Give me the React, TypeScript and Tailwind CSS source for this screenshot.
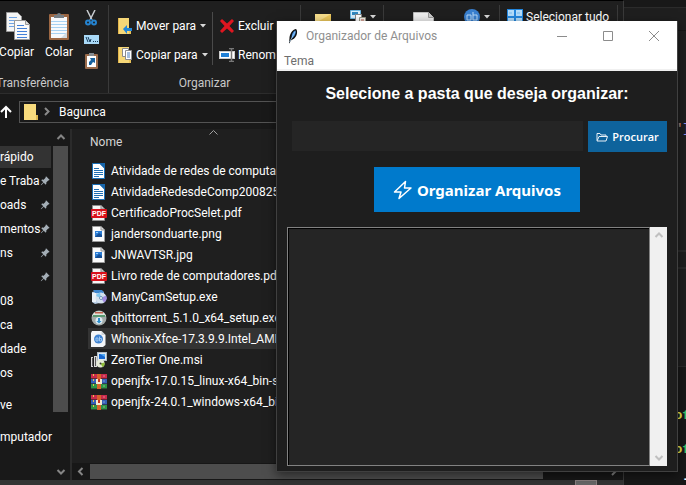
import React from "react";
import { BsPinAngleFill } from "react-icons/bs";

type IconKind = "doc" | "pdf" | "image" | "setup" | "disc" | "box" | "msi" | "rar";

const files: { name: string; icon: IconKind; selected?: boolean }[] = [
  { name: "Atividade de redes de computadores.docx", icon: "doc" },
  { name: "AtividadeRedesdeComp200825.docx", icon: "doc" },
  { name: "CertificadoProcSelet.pdf", icon: "pdf" },
  { name: "jandersonduarte.png", icon: "image" },
  { name: "JNWAVTSR.jpg", icon: "image" },
  { name: "Livro rede de computadores.pdf", icon: "pdf" },
  { name: "ManyCamSetup.exe", icon: "setup" },
  { name: "qbittorrent_5.1.0_x64_setup.exe", icon: "disc" },
  { name: "Whonix-Xfce-17.3.9.9.Intel_AMD64.ova", icon: "box", selected: true },
  { name: "ZeroTier One.msi", icon: "msi" },
  { name: "openjfx-17.0.15_linux-x64_bin-sdk.zip", icon: "rar" },
  { name: "openjfx-24.0.1_windows-x64_bin-sdk.zip", icon: "rar" },
];

const places: { label: string; pinned?: boolean; active?: boolean; spaced?: boolean }[] = [
  { label: "rápido", active: true },
  { label: "e Traba", pinned: true },
  { label: "oads", pinned: true },
  { label: "mentos", pinned: true },
  { label: "ns", pinned: true },
  { label: "", pinned: true },
  { label: "08" },
  { label: "ca" },
  { label: "dade" },
  { label: "os" },
  { label: "ve", spaced: true },
  { label: "mputador", spaced: true },
];

function FileIcon({ kind }: { kind: IconKind }) {
  const svg = "block size-4 shrink-0";
  switch (kind) {
    case "doc":
      return (
        <svg viewBox="0 0 16 16" className={svg}>
          <path d="M1.500.5H9l4.500 4.500v10.500h-12z" fill="#fff" stroke="#1a6fb5" />
          <path d="M8 0h6v6z" fill="#1766ab" />
          <path d="M3 5.500h5M3 7.500h9M3 9.500h9M3 11.500h9M3 13.500h5" stroke="#1f6fb2" />
        </svg>
      );
    case "pdf":
      return (
        <svg viewBox="0 0 16 16" className={svg}>
          <path d="M1.500.5H10l3.500 3.500v11.500h-12z" fill="#f4f4f4" stroke="#8b8b8b" />
          <path d="M10 .5V4h3.500" fill="#ccc" stroke="#8b8b8b" />
          <rect y="4" width="16" height="9" rx="1" fill="#d9101b" />
          <text x="8" y="11" textAnchor="middle" fontFamily="Liberation Sans, sans-serif" fontSize="7" fontWeight="700" fill="#fff">PDF</text>
        </svg>
      );
    case "image":
      return (
        <svg viewBox="0 0 16 16" className={svg}>
          <path d="M1.500.5H10l3.500 3.500v11.500h-12z" fill="#fafafa" stroke="#9a9a9a" />
          <path d="M10 .5V4h3.500" fill="#ddd" stroke="#9a9a9a" />
          <rect x="4" y="5" width="7" height="6" fill="#2b7cd3" />
          <path d="M4 11l4-4 3 2v2z" fill="#174f95" />
          <path d="M5 6h2v1H5z" fill="#9dd0ff" />
        </svg>
      );
    case "setup":
      return (
        <svg viewBox="0 0 16 16" className={svg}>
          <path d="M1 3l9-2 3 2v10l-9 2-3-2z" fill="#b9cfe6" />
          <path d="M2 1h9l2 3H4z" fill="#3d86cf" />
          <path d="M1 4h4v9H1z" fill="#e9f0f7" />
          <circle cx="10" cy="9" r="5.500" fill="#d4e1ee" />
          <path d="M10 9l5-2.500A5.500 5.500 0 0 1 13 13.500z" fill="#a08bdf" />
          <path d="M10 9L5 7a5.500 5.500 0 0 1 4-3.500z" fill="#7fc7ef" />
          <circle cx="10" cy="9" r="1.500" fill="#fff" stroke="#6b93b8" />
        </svg>
      );
    case "disc":
      return (
        <svg viewBox="0 0 16 16" className={svg}>
          <circle cx="8" cy="8" r="7.500" fill="#a3aaa8" />
          <path d="M1 6a7.500 7.500 0 0 1 14 0z" fill="#dfe6df" />
          <path d="M4 2h8v1.500H4z" fill="#c1604f" />
          <path d="M2 5h12v2H2z" fill="#5b9a72" />
          <circle cx="8" cy="10.500" r="3.500" fill="#dcebf3" />
          <path d="M7 8h2v3h1.500L8 13.500 5.500 11H7z" fill="#2d8ecb" />
        </svg>
      );
    case "box":
      return (
        <svg viewBox="0 0 16 16" className={svg}>
          <path d="M1 0h9.500L14.500 4v10L12 16H0V2z" fill="#f4f6f8" />
          <path d="M10.500 0v4h4z" fill="#cfd4d8" />
          <circle cx="7.500" cy="8" r="4.500" fill="#3f83d2" />
          <path d="M5 7h2v3H5zM8.500 5.500V10h2V7.500h-2" fill="none" stroke="#9cc7f2" />
        </svg>
      );
    case "msi":
      return (
        <svg viewBox="0 0 16 16" className={svg}>
          <rect x="6.500" y=".5" width="9" height="8" fill="#dfe8ef" stroke="#aeb9c2" />
          <path d="M8 2h6v5H8z" fill="#1867cf" />
          <path d="M9 2h5v3z" fill="#52a9f3" />
          <path d="M0 5h2v10H0zM3 4h3v11H3z" fill="#d7d7d7" />
          <path d="M4 5h1v9H4zM1 6h1v8H1z" fill="#555" />
          <circle cx="9.500" cy="11.500" r="4" fill="#e6ecd8" />
          <path d="M9.500 11.500l4-1a4 4 0 0 1-2 4.500z" fill="#8ebd3a" />
          <circle cx="9.500" cy="11.500" r="1" fill="#333" />
        </svg>
      );
    default:
      return (
        <svg viewBox="0 0 16 16" className={svg}>
          <rect y="1" width="16" height="5" fill="#c92b4b" />
          <rect y="6" width="16" height="5" fill="#3560b8" />
          <rect y="11" width="16" height="5" fill="#2e9446" />
          <path d="M0 5.500h16M0 10.500h16M0 15.500h16" stroke="#282028" strokeOpacity=".6" />
          <path d="M2.500 1v14" stroke="#e7c34a" strokeDasharray="2 3" />
          <rect x="6" y="1" width="4" height="15" fill="#d8622b" />
          <rect x="5" y="6" width="6" height="5" fill="#f3e9d0" />
          <path d="M7 6h2v3H7z" fill="#c5331f" />
          <path d="M13 2v2M13 7v2M13 12v2" stroke="#fff" strokeOpacity=".4" />
        </svg>
      );
  }
}

function Caret() {
  return (
    <svg viewBox="0 0 6 4" className="h-1 w-1.5 shrink-0">
      <path d="M0 0h6L3 3.500z" fill="#d8d8d8" />
    </svg>
  );
}

function Chevron({ dir, className }: { dir: "up" | "down" | "left" | "right"; className: string }) {
  const d = {
    up: "M1.500 6L5 2.500 8.500 6",
    down: "M1.500 3L5 6.500 8.500 3",
    left: "M6.500 1L3 4.500 6.500 8",
    right: "M3 1l3.500 3.500L3 8",
  }[dir];
  return (
    <svg viewBox="0 0 10 9" className={className}>
      <path d={d} fill="none" stroke="currentColor" strokeWidth="2" />
    </svg>
  );
}

function FolderMove({ copy }: { copy?: boolean }) {
  return (
    <svg viewBox="0 0 14 16" className="h-4 w-3.5 shrink-0">
      <path d="M0 0h11v11h2v5H0z" fill="#f6d777" />
      <path d="M0 0h1v16H0z" fill="#e3b64c" />
      <path d="M11 11h2v5h-2z" fill="#e9c258" />
      {copy ? (
        <>
          <path d="M4.500 1.500h6v8h-6z" fill="#fff" stroke="#8c8c8c" />
          <path d="M7.500 3.500h6v9h-6z" fill="#fff" stroke="#8c8c8c" />
          <path d="M9 6h3M9 8h3M9 10h3" stroke="#4b7fc0" />
        </>
      ) : (
        <path d="M5 11l4-4v3h5v3H9v3z" fill="#2286d8" />
      )}
    </svg>
  );
}

function Ribbon() {
  return (
    <div className="flex h-[93px] shrink-0 border-b border-[#2d2d2d] pt-1">
      <section className="flex w-[109px] shrink-0 flex-col border-r border-[#3a3a3a]">
        <div className="flex h-[70px]">
          <button className="flex w-[34px] flex-col items-end pt-[7px]">
            <svg viewBox="0 0 24 28" className="mr-1 h-7 w-6">
              <path d="M.5.500h11l4 4v15H.5z" fill="#f5f5f5" stroke="#999" />
              <path d="M3 5.500h8M3 8.500h8M3 11.500h8M3 14.500h8" stroke="#70a4e4" />
              <path d="M8.500 8.500h11l4 4v15h-15z" fill="#fafafa" stroke="#999" />
              <path d="M19.500 8.500v4h4" fill="#ddd" stroke="#999" />
              <path d="M11 13.500h7M11 16.500h10M11 19.500h10M11 22.500h10M11 25.500h10" stroke="#4380d8" />
            </svg>
            <span className="mt-1 leading-4">Copiar</span>
          </button>
          <button className="ml-[7px] flex w-[36px] flex-col items-center pt-[7px]">
            <svg viewBox="0 0 20 28" className="h-7 w-5">
              <rect y="2" width="20" height="26" rx="1" fill="#9c6743" />
              <rect x="2" y="5" width="16" height="21" fill="#f8fafc" />
              <path d="M2 9.500h16M2 12.500h16M2 15.500h16M2 18.500h16M2 21.500h16" stroke="#a8d2f2" />
              <path d="M5 3h3a2 2 0 0 1 4 0h3v3H5z" fill="#777f85" />
              <path d="M12 26l6-6v6z" fill="#d4dce2" />
            </svg>
            <span className="mt-1 leading-4">Colar</span>
          </button>
          <div className="ml-1.5 flex w-4 flex-col items-center gap-1.5 pt-[5px]">
            <button aria-label="Recortar">
              <svg viewBox="0 0 12 16" className="block h-4 w-3">
                <path d="M2 0l5 10M10 0L5 10" stroke="#c8ccd0" strokeWidth="1.500" />
                <circle cx="3" cy="12.500" r="2" fill="none" stroke="#2583cf" strokeWidth="2" />
                <circle cx="9" cy="12.500" r="2" fill="none" stroke="#2583cf" strokeWidth="2" />
                <path d="M4 11l2-2 2 2" fill="none" stroke="#2583cf" />
              </svg>
            </button>
            <button aria-label="Copiar caminho">
              <svg viewBox="0 0 15 9" className="my-[3px] block h-[9px] w-[15px]">
                <rect width="15" height="9" fill="#a9d9f7" />
                <path d="M2 2l2 5M4 2l2 5 1-3" stroke="#163a59" fill="none" />
                <path d="M9 6.500h1M11 6.500h1M13 6.500h1" stroke="#163a59" />
              </svg>
            </button>
            <button aria-label="Colar atalho">
              <svg viewBox="0 0 13 16" className="block h-4 w-[13px]">
                <rect y="1" width="13" height="15" rx="1" fill="#9a6b4b" />
                <rect x="2" y="3" width="9" height="11" fill="#fff" />
                <path d="M4 0h5v3H4z" fill="#858b90" />
                <path d="M4 12V9l2-2-1-2h5v5L8 9l-2 3z" fill="#17629f" />
              </svg>
            </button>
          </div>
        </div>
        <span className="-ml-1 leading-5 text-[#c9c9c9]">Transferência</span>
      </section>

      <section className="flex w-[192px] shrink-0 flex-col border-r border-[#3a3a3a]">
        <div className="flex h-[70px] pt-[7px]">
          <div className="mb-2 flex w-[104px] flex-col gap-[5px] border-r border-[#4a4a4a] pl-[9px]">
            <button className="flex h-6 items-center gap-1 whitespace-nowrap pt-1"><FolderMove />Mover para<Caret /></button>
            <button className="flex h-6 items-center gap-1 whitespace-nowrap pt-1"><FolderMove copy />Copiar para<Caret /></button>
          </div>
          <div className="flex flex-col gap-[5px] pl-1.5">
            <button className="flex h-6 items-center gap-[3px] pt-1">
              <svg viewBox="0 0 16 14" className="h-3.5 w-4 shrink-0">
                <path d="M3 0l5 4.500L13 0l2 2-4.500 5 4.500 5-2 2-5-4.500L3 14l-2-2 4.500-5L1 2z" fill="#de1620" />
              </svg>
              Excluir<Caret />
            </button>
            <button className="flex h-6 items-center gap-[3px] pt-1">
              <svg viewBox="0 0 16 14" className="h-3.5 w-4 shrink-0">
                <rect x=".5" y="3.500" width="15" height="7" fill="#fff" stroke="#ccc" />
                <rect x="2" y="5" width="8" height="4" fill="#2080d6" />
                <path d="M10 .5h5M10 13.500h5M12.500 0v14" stroke="#777" strokeWidth="1.500" />
              </svg>
              Renome
            </button>
          </div>
        </div>
        <span className="text-center leading-5 text-[#c9c9c9]">Organizar</span>
      </section>

      <section className="flex w-[83px] shrink-0 items-start border-r border-[#3a3a3a] pl-3.5">
        <svg viewBox="0 0 16 18" className="mt-[9px] h-[18px] w-4"><path d="M0 0h16v18H0z" fill="#edc85c" /><path d="M0 0h16L4 7H0z" fill="#f7de8b" /></svg>
        <svg viewBox="0 0 16 16" className="ml-[19px] mt-[5px] size-4">
          <path d="M.5.5h10v8H.5z" fill="#d8effd" stroke="#6cb6df" /><path d="M2 2h6v3H2z" fill="#2f86bd" />
          <path d="M5.500 4.500h6v9h-6z" fill="#fff" stroke="#888" /><path d="M9.500 7.500h6v8h-6z" fill="#f5f0ec" stroke="#998" /><path d="M11 10h3M11 12h3" stroke="#b85d46" />
        </svg>
        <span className="ml-1 mt-[10px] flex"><Caret /></span>
      </section>
      <section className="flex w-[116px] shrink-0 items-start border-r border-[#3a3a3a] pl-[29px]">
        <svg viewBox="0 0 21 20" className="mt-[7px] h-5 w-[21px]"><path d="M.5.500h15l5 5V20H.5z" fill="#eee" stroke="#bbb" /><path d="M15.500.5v5h5" fill="#ccc" stroke="#999" /></svg>
        <svg viewBox="0 0 16 16" className="ml-[30px] mt-[4px] size-4"><circle cx="8" cy="8" r="8" fill="#397fce" /><path d="M3 6h4v5H3zM9 3v8h4V6H9" fill="none" stroke="#b8daf8" /></svg>
        <span className="ml-1 mt-[10px] flex"><Caret /></span>
      </section>
      <section className="flex w-[118px] shrink-0 items-start border-r border-[#3a3a3a] pl-[7px]">
        <button className="flex items-center gap-[3px] whitespace-nowrap pt-1 leading-4">
          <svg viewBox="0 0 16 16" className="size-4"><path d="M0 0h16v16H0z" fill="#2386dd" /><path d="M1 1h6v6H1zM9 1h6v6H9zM1 9h6v6H1zM9 9h6v6H9z" fill="#b3dcfa" /><path d="M2 4h3M10 4h3" stroke="#76b9ed" /></svg>
          Selecionar tudo
        </button>
      </section>
    </div>
  );
}

function Sidebar() {
  return (
    <nav className="flex w-[72px] shrink-0 border-r-2 border-[#2b2b2b] bg-[#191919]">
      <ul className="w-[53px] shrink-0 pt-4">
        {places.map((p, i) => (
          <li key={i} className={p.spaced ? "mt-2" : ""}>
            <a href="#" aria-label={p.label || "Pasta fixada"} className="flex h-6 w-[51px] items-center whitespace-nowrap">
              <span className={`flex h-[22px] w-full items-center justify-between ${p.active ? "bg-[#333333]" : ""}`}>
                <span>{p.label}</span>
                {p.pinned && <BsPinAngleFill className="mr-px size-2.5 shrink-0 text-[#a4aeb6]" />}
              </span>
            </a>
          </li>
        ))}
      </ul>
      <div className="flex w-[15px] flex-col items-center text-[#858585]">
        <Chevron dir="up" className="my-1 h-[9px] w-2.5" />
        <div className="w-full flex-1 pb-[55px]"><div className="h-full bg-[#4d4d4d]" /></div>
        <Chevron dir="down" className="mb-1 h-[9px] w-2.5" />
      </div>
    </nav>
  );
}

function Explorer() {
  return (
    <main className="flex min-w-0 flex-1 flex-col border-r border-t border-r-[#3a3a3a] border-t-black bg-[#1f1f1f]">
      <Ribbon />
      <div className="flex h-[35px] shrink-0 items-center bg-[#191919]">
        <svg viewBox="0 0 12 14" className="h-3.5 w-3 shrink-0"><path d="M6 13V2M1 7l5-5 5 5" fill="none" stroke="#fff" strokeWidth="2" /></svg>
        <div className="ml-[7px] flex h-[22px] flex-1 items-center border border-[#535353] pl-1">
          <svg viewBox="0 0 14 16" className="h-4 w-3.5"><path d="M0 0h12v11h2v5H0z" fill="#f8db7d" /><path d="M12 11h2v5h-2z" fill="#dfb84e" /></svg>
          <Chevron dir="right" className="ml-1 h-[9px] w-2.5 text-[#8a8a8a]" />
          <span className="ml-[7px]">Bagunca</span>
        </div>
      </div>
      <div className="flex min-h-0 flex-1">
        <Sidebar />
        <div className="flex min-w-0 flex-1 flex-col">
          <div className="min-h-0 flex-1 overflow-hidden pl-4">
            <table className="w-full border-collapse">
              <thead>
                <tr>
                  <th className="h-[31px] p-0 pb-[5px] pl-0.5 text-left font-normal text-[#d5d5d5]">
                    <span className="flex h-[26px] items-center">
                      <span className="w-[119px]">Nome</span>
                      <svg viewBox="0 0 9 5" className="mb-5 h-[5px] w-[9px]"><path d="M.5 4.500l4-4 4 4" fill="none" stroke="#a0a0a0" /></svg>
                    </span>
                  </th>
                </tr>
              </thead>
              <tbody>
                {files.map((f) => (
                  <tr key={f.name} className={f.selected ? "bg-[#333333]" : ""}>
                    <td className="p-0">
                      <span className="flex h-[21px] items-center gap-1 whitespace-nowrap pl-[3px]">
                        <FileIcon kind={f.icon} />
                        {f.name}
                      </span>
                    </td>
                  </tr>
                ))}
              </tbody>
            </table>
          </div>
          <div className="flex h-[17px] shrink-0 items-center bg-[#171717] text-[#858585]">
            <Chevron dir="left" className="mx-1 h-[9px] w-2.5" />
            <div className="h-[15px] flex-1 pr-[66px]"><div className="h-full bg-[#4d4d4d]" /></div>
            <Chevron dir="right" className="mr-1 h-[9px] w-2.5" />
          </div>
        </div>
      </div>
      <div className="flex h-[5px] shrink-0 justify-end bg-[#333333] pr-[26px]">
        <div className="w-[22px] border border-b-0 border-[#8a8080] bg-[#666]" />
      </div>
    </main>
  );
}

function Editor() {
  return (
    <aside className="flex w-[62px] shrink-0 flex-col overflow-hidden bg-[#1f1f1f] text-right font-['Liberation_Mono',monospace] text-[13px] leading-4">
      <div className="h-2 shrink-0 border-b border-[#2b2b2b] bg-[#181818]" />
      <div className="h-[23px] shrink-0 border-b border-[#161616]" />
      <div className="h-[221px] shrink-0 border-b-2 border-[#2b2b2b] pt-[90px]">
        <p className="-mr-1"><span className="text-[#ce9178]">"</span><span className="text-[#8f8ff0]">]</span></p>
      </div>
      <div className="h-[17px] shrink-0 border-b-2 border-[#2b2b2b]" />
      <div className="h-[98px] shrink-0 border-b border-[#2b2b2b]" />
      <div className="flex-1 bg-[#181818] pt-[41px] font-bold text-[#f0e64c]">
        <p className="-mr-1">o<span className="text-[#35c46a]">f</span></p>
        <p className="-mr-1 mt-[18px]">o<span className="text-[#35c46a]">f</span></p>
        <p className="-mr-1 mt-[14px] text-white">-</p>
      </div>
    </aside>
  );
}

function Organizer() {
  return (
    <section className="absolute bottom-[13px] left-[276px] right-2 top-[21px] flex flex-col border border-t-0 border-[#404040] bg-[#1e1e1e] shadow-[0_3px_10px_rgba(0,0,0,0.5)]">
      <header className="flex h-[30px] shrink-0 items-center bg-white text-[#8f8f8f]">
        <svg viewBox="0 0 12 18" className="ml-2.5 h-4 w-3">
          <path d="M9 1c1 0 2 2 1.500 5C10 10 7 13 3.500 14L2 17.500l-.5-1L2 12C2 7 5 2 9 1z" fill="#111" />
          <path d="M8.500 2.500c1 2 .5 6-4 9.500C4 8 5.500 4.500 8.500 2.500z" fill="#3f8de0" />
          <path d="M2 16L8.500 4" stroke="#b9dcf8" strokeWidth=".8" />
        </svg>
        <h1 className="ml-[7px] flex-1 whitespace-nowrap">Organizador de Arquivos</h1>
        <button aria-label="Minimizar" className="flex w-[46px] justify-center"><svg viewBox="0 0 10 10" className="size-2.5"><path d="M0 5.500h10" stroke="#8c8c8c" /></svg></button>
        <button aria-label="Maximizar" className="flex w-[46px] justify-center"><svg viewBox="0 0 10 10" className="size-2.5"><path d="M.5.5h9v9h-9z" fill="none" stroke="#8c8c8c" /></svg></button>
        <button aria-label="Fechar" className="flex w-[46px] justify-center"><svg viewBox="0 0 10 10" className="size-2.5"><path d="M0 0l10 10M10 0L0 10" stroke="#8c8c8c" /></svg></button>
      </header>
      <div className="flex h-5 shrink-0 items-center border-b-2 border-[#f0f0f0] bg-white pl-[7px] pt-0.5 text-[#6d6d6d]">
        <button>Tema</button>
      </div>
      <form className="flex min-h-0 flex-1 flex-col px-2.5 pb-[5px] pt-[11px]" onSubmit={(e) => e.preventDefault()}>
        <label htmlFor="pasta" className="text-center font-['Liberation_Sans',Arial,sans-serif] text-base font-bold leading-6 text-white">
          Selecione a pasta que deseja organizar:
        </label>
        <div className="mt-[15px] flex items-start gap-[5px] pl-[5px]">
          <input id="pasta" className="h-[30px] min-w-0 flex-1 bg-[#252525] px-2 text-white outline-none" />
          <button type="button" className="flex h-[31px] w-[79px] items-center justify-center gap-1 bg-[#0e639c] font-['Open_Sans','Noto_Sans',sans-serif] text-[11px] font-semibold">
            <svg viewBox="0 0 12 10" className="h-2.5 w-3"><path d="M1 8.500v-7h3l1 1.500h5v1.500M1 9l2-4.500h8.500L10 9z" fill="none" stroke="#e8f0f6" /></svg>
            Procurar
          </button>
        </div>
        <button type="submit" className="mt-[15px] flex h-[45px] w-[206px] shrink-0 items-center justify-center gap-1 self-center bg-[#007acc] font-['Noto_Sans','Open_Sans',sans-serif] text-[15px] font-bold">
          <svg viewBox="0 0 20 20" className="size-5"><path d="M12.500 1.500L1.500 12h6.500l-2 6.500L18 8h-6.500z" fill="none" stroke="#fff" strokeWidth="1.500" strokeLinejoin="round" /></svg>
          Organizar Arquivos
        </button>
        <div className="mt-[15px] flex min-h-0 flex-1">
          <div className="flex min-w-0 flex-1 border border-[#828282]">
            <textarea aria-label="Registro" readOnly className="block min-w-0 flex-1 resize-none border-l border-t border-black bg-[#252525] outline-none" />
          </div>
          <div className="flex w-[17px] flex-col items-center justify-between bg-[#f0f0f0] py-1 text-[#c0c0c0]">
            <Chevron dir="up" className="h-[9px] w-2.5" />
            <Chevron dir="down" className="h-[9px] w-2.5" />
          </div>
        </div>
      </form>
    </section>
  );
}

export default function App() {
  return (
    <div className="relative flex h-screen overflow-hidden bg-[#1f1f1f] font-[Roboto,'Open_Sans',sans-serif] text-[12px] leading-4 text-white">
      <Explorer />
      <Editor />
      <Organizer />
    </div>
  );
}
